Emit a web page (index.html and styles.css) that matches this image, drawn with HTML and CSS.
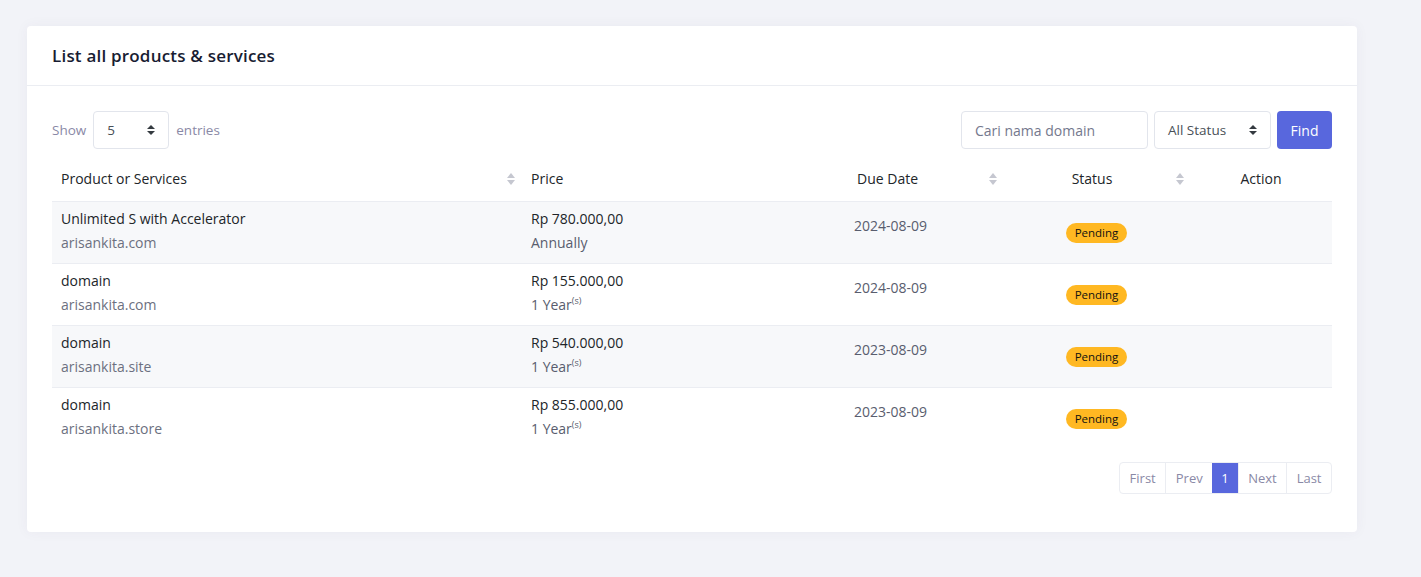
FILE: index.html
```html
<!DOCTYPE html>
<html lang="id">
<head>
<meta charset="utf-8">
<title>List all products & services</title>
<link rel="stylesheet" href="styles.css">
</head>
<body>
<div class="page">
  <div class="card">
    <div class="card-head">
      <h3 class="card-title">List all products &amp; services</h3>
    </div>
    <div class="card-body">
      <div class="toolbar">
        <div class="length">
          <span class="muted">Show</span>
          <div class="select small"><span>5</span><span class="arrows"></span></div>
          <span class="muted">entries</span>
        </div>
        <div class="filters">
          <div class="input">Cari nama domain</div>
          <div class="select status"><span>All Status</span><span class="arrows"></span></div>
          <button class="btn">Find</button>
        </div>
      </div>
      <table class="table">
        <colgroup>
          <col class="c1"><col class="c2"><col class="c3"><col class="c4"><col class="c5">
        </colgroup>
        <thead>
          <tr>
            <th class="sort">Product or Services</th>
            <th class="price">Price</th>
            <th class="sort">Due Date</th>
            <th class="sort center">Status</th>
            <th class="center">Action</th>
          </tr>
        </thead>
        <tbody>
          <tr>
            <td><div class="strong">Unlimited S with Accelerator</div><div class="sub">arisankita.com</div></td>
            <td class="price"><div class="strong">Rp 780.000,00</div><div class="sub dark">Annually</div></td>
            <td class="date">2024-08-09</td>
            <td class="center"><span class="badge">Pending</span></td>
            <td></td>
          </tr>
          <tr>
            <td><div class="strong">domain</div><div class="sub">arisankita.com</div></td>
            <td class="price"><div class="strong">Rp 155.000,00</div><div class="sub dark">1 Year<sup>(s)</sup></div></td>
            <td class="date">2024-08-09</td>
            <td class="center"><span class="badge">Pending</span></td>
            <td></td>
          </tr>
          <tr>
            <td><div class="strong">domain</div><div class="sub">arisankita.site</div></td>
            <td class="price"><div class="strong">Rp 540.000,00</div><div class="sub dark">1 Year<sup>(s)</sup></div></td>
            <td class="date">2023-08-09</td>
            <td class="center"><span class="badge">Pending</span></td>
            <td></td>
          </tr>
          <tr>
            <td><div class="strong">domain</div><div class="sub">arisankita.store</div></td>
            <td class="price"><div class="strong">Rp 855.000,00</div><div class="sub dark">1 Year<sup>(s)</sup></div></td>
            <td class="date">2023-08-09</td>
            <td class="center"><span class="badge">Pending</span></td>
            <td></td>
          </tr>
        </tbody>
      </table>
      <div class="pager-row">
        <ul class="pager">
          <li>First</li>
          <li>Prev</li>
          <li class="active">1</li>
          <li>Next</li>
          <li>Last</li>
        </ul>
      </div>
    </div>
  </div>
</div>
</body>
</html>
```
FILE: styles.css
```css
* { box-sizing: border-box; }
html, body { margin: 0; padding: 0; }
body {
  background: #f2f3f8;
  font-family: "Open Sans", "DejaVu Sans", sans-serif;
  color: #212529;
  font-size: 14px;
}
.page { padding: 26px 64px 45px 27px; }
.card {
  width: 1330px;
  background: #fff;
  border-radius: 4px;
  box-shadow: 0 0 13px rgba(82, 63, 105, 0.05);
}
.card-head {
  height: 60px;
  padding: 0 25px;
  display: flex;
  align-items: center;
  border-bottom: 1px solid #ebedf2;
}
.card-title {
  margin: 0;
  font-size: 17px;
  font-weight: 600;
  letter-spacing: 0.2px;
  color: #181c32;
}
.card-body { padding: 25px 25px 38px; }
.toolbar {
  display: flex;
  justify-content: space-between;
  align-items: center;
  height: 38px;
}
.length { display: flex; align-items: center; gap: 7px; }
.muted { color: #8a89a6; font-size: 13.5px; }
.select {
  height: 38px;
  border: 1px solid #e2e5ec;
  border-radius: 4px;
  display: flex;
  align-items: center;
  justify-content: space-between;
  padding: 0 13px 0 13px;
  color: #495057;
  font-size: 13.5px;
}
.select.small { width: 76px; }
.select.status { width: 117px; }
.arrows {
  width: 8px; height: 10px;
  position: relative;
}
.arrows::before, .arrows::after {
  content: "";
  position: absolute; left: 0;
  border-left: 4px solid transparent;
  border-right: 4px solid transparent;
}
.arrows::before { top: 0; border-bottom: 4px solid #343a40; }
.arrows::after { bottom: 0; border-top: 4px solid #343a40; }
.filters { display: flex; align-items: center; gap: 6px; }
.input {
  width: 187px; height: 38px;
  border: 1px solid #e2e5ec;
  border-radius: 4px;
  display: flex; align-items: center;
  padding: 0 13px;
  color: #74788d;
  font-size: 14px;
}
.btn {
  width: 55px; height: 38px;
  border: 0; border-radius: 4px;
  background: #5867dd;
  color: #fff;
  font-family: inherit;
  font-size: 14px;
  font-weight: 500;
}
.table {
  width: 100%;
  border-collapse: collapse;
  margin-top: 11px;
  table-layout: fixed;
}
.c1 { width: 469px; }
.c2 { width: 327px; }
.c3 { width: 155px; }
.c4 { width: 187px; }
.c5 { width: 142px; }
th {
  height: 41px;
  text-align: left;
  font-weight: 500;
  padding: 0 9px 3px;
  color: #212529;
  border-bottom: 1px solid #ebedf2;
  position: relative;
}
th.sort::before, th.sort::after {
  content: "";
  position: absolute;
  right: 6px;
  width: 0; height: 0;
  border-left: 4px solid transparent;
  border-right: 4px solid transparent;
}
th.sort::before { top: 13px; border-bottom: 5px solid #c5c7d0; }
th.sort::after { top: 20px; border-top: 5px solid #c5c7d0; }
th.center, td.center { text-align: center; }
th.sort.center { padding-right: 18px; }
tbody tr { height: 62px; }
tbody tr:nth-child(odd) { background: #f7f8fa; }
tbody tr + tr td { border-top: 1px solid #ebedf2; }
td { padding: 7px 9px 0; vertical-align: top; }
th.price, td.price { padding-left: 10px; }
.strong { font-weight: 500; color: #212529; line-height: 20px; }
.sub { color: #6c7080; line-height: 20px; margin-top: 4px; }
.sub.dark { color: #595d6e; }
sup { font-size: 9px; line-height: 0; vertical-align: 6px; }
td.date { padding-top: 14px; padding-left: 6px; color: #595d6e; }
td.center { vertical-align: middle; padding-top: 0; }
.badge {
  display: inline-block;
  background: #ffb822;
  color: #111;
  font-size: 11.5px;
  line-height: 20px;
  padding: 0 9px;
  border-radius: 10px;
}
.pager-row { display: flex; justify-content: flex-end; margin-top: 13px; }
.pager {
  display: flex;
  list-style: none;
  margin: 0; padding: 0;
  border: 1px solid #ebedf2;
  border-radius: 4px;
  overflow: hidden;
  font-size: 13px;
}
.pager li {
  height: 30px;
  padding: 0 9.5px;
  display: flex; align-items: center;
  color: #8a89a6;
  border-left: 1px solid #ebedf2;
}
.pager li:first-child { border-left: 0; }
.pager li.active { background: #5867dd; color: #fff; border-left: 0; padding: 0 9px; }
```
